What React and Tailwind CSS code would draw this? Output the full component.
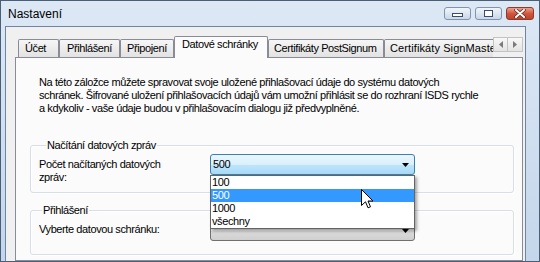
import React from "react";

export default function App() {
  return (
    <div className="w-[540px] h-[262px] overflow-hidden bg-white">
      <div className="relative flex h-[262px] w-[540px] flex-col border border-[#4a5e78] bg-gradient-to-b from-[#dde8f5] to-[#c4d6eb] font-['Liberation_Sans',Arial,sans-serif] text-[11px] leading-[13px] tracking-[-0.4px] text-black">
        {/* title bar */}
        <div className="flex h-[25px] shrink-0 items-start justify-between pl-[7px] pr-[5px]">
          <span className="mt-[6px] text-[12px] leading-[14px] tracking-normal">Nastavení</span>
          <div className="mt-[6px] flex gap-[4px]">
            <div className="flex h-[13px] w-[27px] items-end justify-center rounded-[3px] border border-[#8194ac] bg-gradient-to-b from-[#f1f5fa] to-[#c9d7e8] pb-[2px]">
              <div className="h-[4px] w-[11px] border border-[#3b4d68] bg-white"></div>
            </div>
            <div className="flex h-[13px] w-[27px] items-center justify-center rounded-[3px] border border-[#8194ac] bg-gradient-to-b from-[#f1f5fa] to-[#c9d7e8]">
              <div className="h-[7px] w-[9px] border border-[#3b4d68] bg-white"></div>
            </div>
            <div className="flex h-[13px] w-[28px] items-center justify-center rounded-[3px] border border-[#8a3c2c] bg-gradient-to-b from-[#eba08e] via-[#d2563d] to-[#c0442c]">
              <svg width="12" height="9" viewBox="0 0 12 9">
                <path d="M2 1 L10 8 M10 1 L2 8" stroke="#5a2418" strokeWidth="3.4" strokeLinecap="round" />
                <path d="M2 1 L10 8 M10 1 L2 8" stroke="#ffffff" strokeWidth="2" strokeLinecap="round" />
              </svg>
            </div>
          </div>
        </div>

        {/* client */}
        <div className="ml-[4px] mr-[13px] flex min-h-0 flex-1 flex-col overflow-hidden border border-b-0 border-[#6f84a0] bg-[#f0f0f0] pl-[9px] pr-[2px] pt-[9px]">
          {/* tabs */}
          <div className="flex h-[21px] shrink-0 items-end">
            <div className="w-[3px] shrink-0"></div>
            <div className="flex h-[18px] w-[41px] shrink-0 items-center rounded-t-[2px] border border-b-0 border-[#898c95] bg-gradient-to-b from-[#f6f6f6] to-[#e2e2e2] pl-[6px]">Účet</div>
            <div className="flex h-[18px] w-[61px] shrink-0 items-center rounded-t-[2px] border border-b-0 border-[#898c95] bg-gradient-to-b from-[#f6f6f6] to-[#e2e2e2] pl-[7px]">Přihlášení</div>
            <div className="flex h-[18px] w-[54px] shrink-0 items-center rounded-t-[2px] border border-b-0 border-[#898c95] bg-gradient-to-b from-[#f6f6f6] to-[#e2e2e2] pl-[6px]">Připojení</div>
            <div className="relative z-10 -mb-px flex h-[22px] w-[94px] shrink-0 items-start rounded-t-[2px] border border-b-0 border-[#898c95] bg-[#fbfbfb] pl-[7px] pt-[1px]">Datové schránky</div>
            <div className="flex h-[18px] w-[116px] shrink-0 items-center rounded-t-[2px] border border-b-0 border-[#898c95] bg-gradient-to-b from-[#f6f6f6] to-[#e2e2e2] pl-[5px] whitespace-nowrap">Certifikáty PostSignum</div>
            <div className="flex h-[18px] min-w-0 flex-1 items-end overflow-hidden">
              <div className="flex h-[18px] w-[130px] shrink-0 items-center rounded-t-[2px] border border-b-0 border-[#898c95] bg-gradient-to-b from-[#f6f6f6] to-[#e2e2e2] pl-[5px] tracking-[0.1px] whitespace-nowrap">Certifikáty SignMaster</div>
            </div>
            <div className="mb-[5px] flex shrink-0 self-end">
              <div className="flex h-[15px] w-[15px] items-center justify-center border border-[#c3c3c3] bg-gradient-to-b from-[#f8f8f8] to-[#e4e4e4]">
                <svg width="4" height="7" viewBox="0 0 4 7"><path d="M4 0 L0 3.5 L4 7 Z" fill="#7a7a7a" /></svg>
              </div>
              <div className="flex h-[15px] w-[15px] items-center justify-center border border-l-0 border-[#c3c3c3] bg-gradient-to-b from-[#f8f8f8] to-[#e4e4e4]">
                <svg width="4" height="7" viewBox="0 0 4 7"><path d="M0 0 L4 3.5 L0 7 Z" fill="#7a7a7a" /></svg>
              </div>
            </div>
          </div>

          {/* panel */}
          <div className="flex min-h-0 flex-1 flex-col border border-[#898c95] bg-[#fbfbfb] pl-[14px] pr-[8px]">
            <p className="mt-[18px] pl-[9px] whitespace-nowrap">
              Na této záložce můžete spravovat svoje uložené přihlašovací údaje do systému datových<br />
              schránek. Šifrované uložení přihlašovacích údajů vám umožní přihlásit se do rozhraní ISDS rychle<br />
              a kdykoliv - vaše údaje budou v přihlašovacím dialogu již předvyplněné.
            </p>

            <fieldset className="mt-[24px] rounded-[3px] border border-[#d5dfe5] px-[8px] pb-[8px] shadow-[inset_1px_1px_0_#ffffff,1px_1px_0_#ffffff]">
              <legend className="ml-[7px] bg-[#fbfbfb] px-[1px]">Načítání datových zpráv</legend>
              <div className="flex items-start">
                <div className="w-[171px] shrink-0 pt-[6px]">Počet načítaných datových<br />zpráv:</div>
                <div className="relative z-20 mt-[2px] w-[205px] shrink-0">
                  <div className="flex h-[21px] items-center justify-between rounded-[3px] border border-[#3c7fb1] bg-[linear-gradient(to_bottom,#eaf6fd_0%,#d9f0fc_50%,#bee6fd_50%,#a7d9f5_100%)] pl-[2px] pr-[5px]">
                    <span>500</span>
                    <svg width="7" height="4" viewBox="0 0 7 4"><path d="M0 0 L7 0 L3.5 4 Z" fill="#000" /></svg>
                  </div>
                  <div className="absolute left-0 top-full w-[205px] border border-[#646464] bg-white shadow-[2px_2px_3px_rgba(0,0,0,0.35)]">
                    <div className="h-[13px] pl-[1px]">100</div>
                    <div className="h-[13px] bg-[#3399ff] pl-[1px] text-white">500</div>
                    <div className="h-[13px] pl-[1px]">1000</div>
                    <div className="h-[13px] pl-[1px]">všechny</div>
                    <svg className="absolute left-[150px] top-[13px]" width="13" height="20" viewBox="0 0 13 20">
                      <path d="M0.5 0.5 L0.5 16.5 L4.5 12.8 L7 18.8 L9.5 17.8 L7 12 L12 12 Z" fill="#ffffff" stroke="#000000" strokeWidth="1" strokeLinejoin="miter" />
                    </svg>
                  </div>
                </div>
              </div>
            </fieldset>

            <fieldset className="mt-[11px] rounded-[3px] border border-[#d5dfe5] px-[8px] pb-[13px] shadow-[inset_1px_1px_0_#ffffff,1px_1px_0_#ffffff]">
              <legend className="ml-[3px] bg-[#fbfbfb] px-[1px]">Přihlášení</legend>
              <div className="flex items-start">
                <div className="w-[171px] shrink-0 pt-[6px]">Vyberte datovou schránku:</div>
                <div className="mt-[3px] w-[205px] shrink-0">
                  <div className="flex h-[21px] items-center justify-between rounded-[3px] border border-[#707070] bg-[linear-gradient(to_bottom,#f2f2f2_0%,#ebebeb_50%,#dddddd_50%,#cfcfcf_100%)] pl-[2px] pr-[5px]">
                    <span></span>
                    <svg width="7" height="4" viewBox="0 0 7 4"><path d="M0 0 L7 0 L3.5 4 Z" fill="#000" /></svg>
                  </div>
                </div>
              </div>
            </fieldset>
          </div>
        </div>
      </div>
    </div>
  );
}
